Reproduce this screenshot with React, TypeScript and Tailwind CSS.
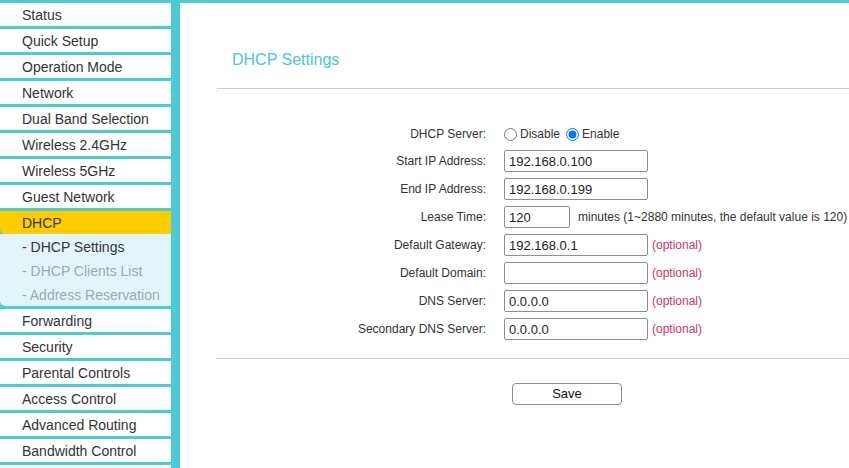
import React from "react";

const teal = "bg-[#4acbd6]";

const topItems = [
  "Status",
  "Quick Setup",
  "Operation Mode",
  "Network",
  "Dual Band Selection",
  "Wireless 2.4GHz",
  "Wireless 5GHz",
  "Guest Network",
];

const bottomItems = [
  "Forwarding",
  "Security",
  "Parental Controls",
  "Access Control",
  "Advanced Routing",
  "Bandwidth Control",
  "",
];

function NavItem({ label }: { label: string }) {
  return (
    <div className="w-[171px] h-[23px] shrink-0 bg-white pl-[22px] pt-[1px] text-[14px] leading-[22px] text-[#333] whitespace-nowrap">
      {label}
    </div>
  );
}

function Field({ value, w = "w-[144px]" }: { value: string; w?: string }) {
  return (
    <input
      readOnly
      value={value}
      className={`${w} h-[22px] border border-[#8f8f8f] rounded-[2px] px-[4px] text-[13px] text-[#222] bg-white outline-none`}
    />
  );
}

function Label({ children, h = "h-[22px]" }: { children: React.ReactNode; h?: string }) {
  return (
    <div className={`${h} flex items-center justify-end text-[12px] text-[#333] whitespace-nowrap`}>
      {children}
    </div>
  );
}

function Optional() {
  return <span className="ml-[4px] text-[12px] text-[#c2366a]">(optional)</span>;
}

export default function App() {
  return (
    <div className="w-[849px] h-[468px] overflow-hidden bg-white font-['Liberation_Sans',Arial,sans-serif]">
      <div className={`h-[3px] ${teal}`} />
      <div className="flex h-[465px]">
        <div className={`w-[180px] shrink-0 ${teal} flex flex-col gap-[3px]`}>
          {topItems.map((l) => (
            <NavItem key={l} label={l} />
          ))}
          <div className="w-[171px] flex flex-col shrink-0">
            <div className="h-[23px] bg-[#ffcc00] rounded-bl-[5px] pl-[22px] pt-[2px] text-[14px] leading-[21px] text-[#333]">
              DHCP
            </div>
            <div className="bg-[#e2f6f9] rounded-bl-[5px] flex flex-col">
              <div className="h-[24px] pl-[22px] pt-[2px] text-[14px] leading-[22px] text-[#333]">- DHCP Settings</div>
              <div className="h-[24px] pl-[22px] pt-[2px] text-[14px] leading-[22px] text-[#9aabb0]">- DHCP Clients List</div>
              <div className="h-[24px] pl-[22px] pt-[2px] text-[14px] leading-[22px] text-[#9aabb0]">- Address Reservation</div>
            </div>
          </div>
          {bottomItems.map((l, i) => (
            <NavItem key={i} label={l} />
          ))}
        </div>

        <div className="flex-1 pl-[37px]">
          <div className="mt-[47px] pl-[15px] h-[20px] leading-[20px] text-[16px] text-[#4ac6d4]">
            DHCP Settings
          </div>
          <div className="mt-[18px] border-t border-[#cccccc]" />

          <div className="mt-[35px] grid grid-cols-[269px_1fr] gap-x-[18px] gap-y-[6px]">
            <Label h="h-[20px]">DHCP Server:</Label>
            <div className="h-[20px] flex items-center text-[12px] text-[#333]">
              <input type="radio" name="dhcp" readOnly className="m-0 w-[13px] h-[13px]" />
              <span className="ml-[3px]">Disable</span>
              <input type="radio" name="dhcp" readOnly checked className="ml-[6px] m-0 w-[13px] h-[13px]" />
              <span className="ml-[3px]">Enable</span>
            </div>

            <Label>Start IP Address:</Label>
            <div className="flex items-center">
              <Field value="192.168.0.100" />
            </div>

            <Label>End IP Address:</Label>
            <div className="flex items-center">
              <Field value="192.168.0.199" />
            </div>

            <Label>Lease Time:</Label>
            <div className="flex items-center">
              <Field value="120" w="w-[66px]" />
              <span className="ml-[8px] text-[12px] text-[#333] whitespace-nowrap">
                minutes (1~2880 minutes, the default value is 120)
              </span>
            </div>

            <Label>Default Gateway:</Label>
            <div className="flex items-center">
              <Field value="192.168.0.1" />
              <Optional />
            </div>

            <Label>Default Domain:</Label>
            <div className="flex items-center">
              <Field value="" />
              <Optional />
            </div>

            <Label>DNS Server:</Label>
            <div className="flex items-center">
              <Field value="0.0.0.0" />
              <Optional />
            </div>

            <Label>Secondary DNS Server:</Label>
            <div className="flex items-center">
              <Field value="0.0.0.0" />
              <Optional />
            </div>
          </div>

          <div className="mt-[18px] border-t border-[#cccccc]" />

          <div className="mt-[22px] grid grid-cols-[269px_1fr] gap-x-[18px]">
            <div />
            <div>
              <button className="ml-[8px] w-[110px] h-[22px] border border-[#8f8f8f] rounded-[4px] bg-white text-[13px] text-[#111] leading-[20px]">
                Save
              </button>
            </div>
          </div>
        </div>
      </div>
    </div>
  );
}
